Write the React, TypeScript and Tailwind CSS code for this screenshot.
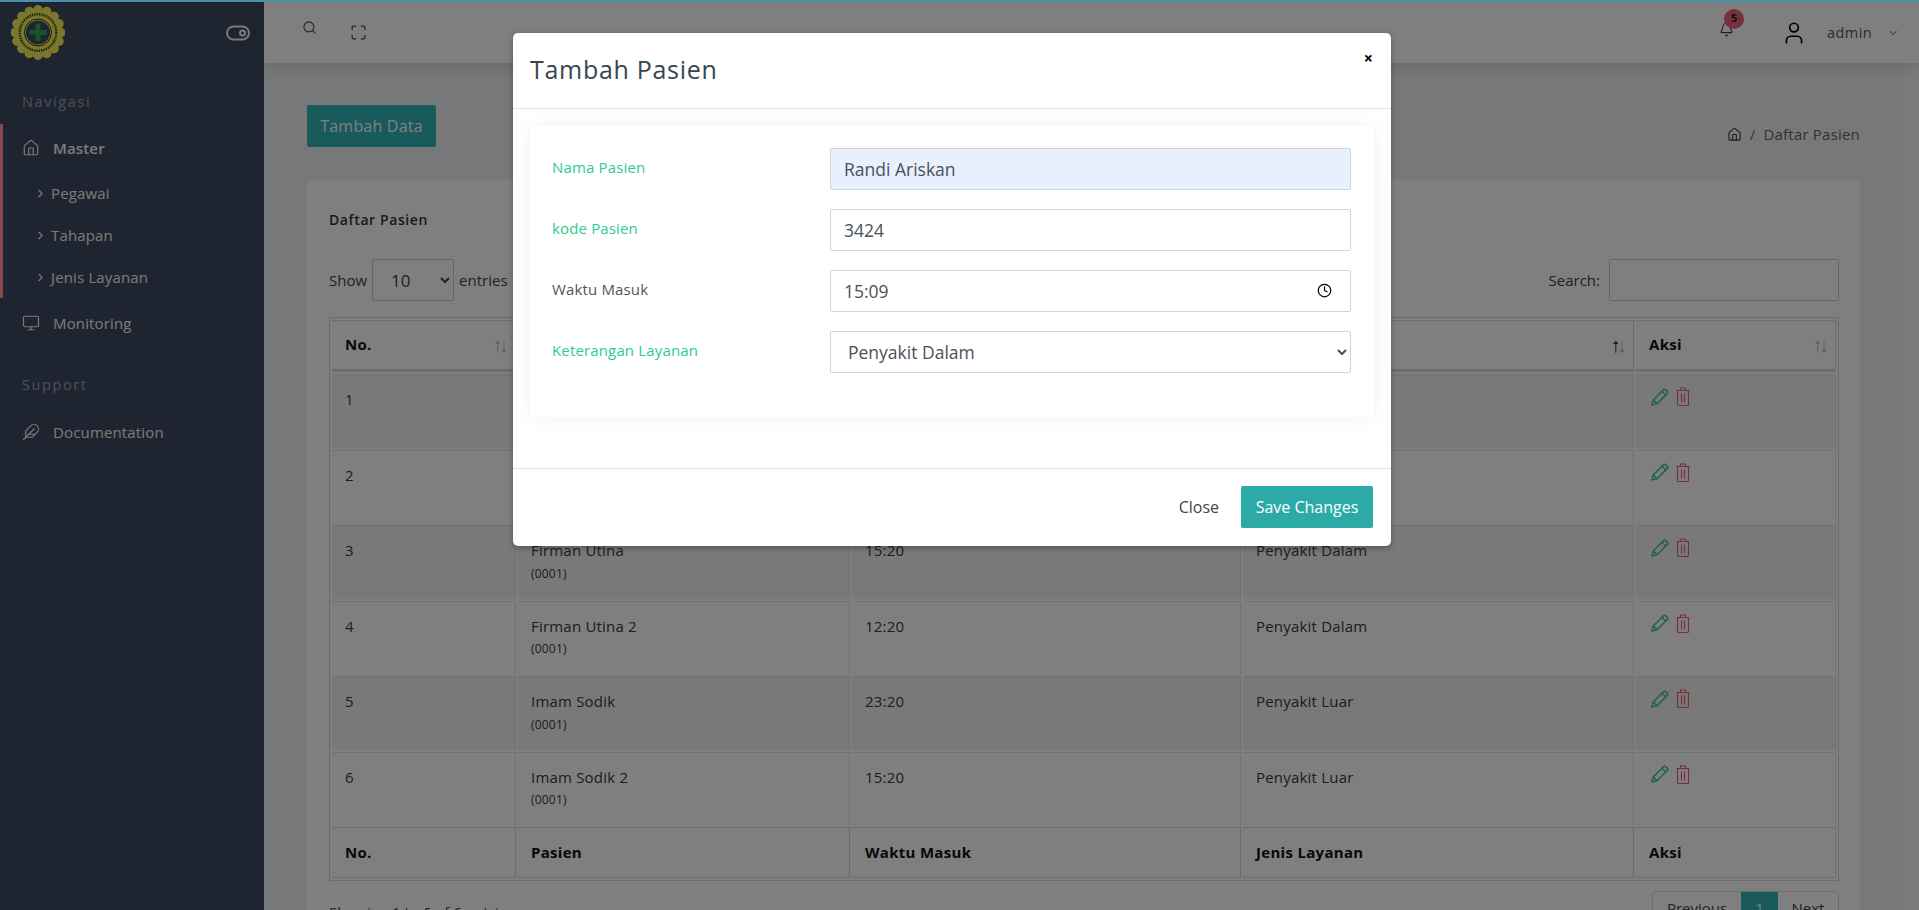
import { Bell, ChevronDown, ChevronRight, Clock, Feather, House, Maximize, Monitor, Search, User } from 'lucide-react'

const rows = [
  { no: 1, name: 'Randi Ariskan', time: '15:20', service: 'Penyakit Dalam' },
  { no: 2, name: 'Randi Ariskan 2', time: '15:20', service: 'Penyakit Dalam' },
  { no: 3, name: 'Firman Utina', time: '15:20', service: 'Penyakit Dalam' },
  { no: 4, name: 'Firman Utina 2', time: '12:20', service: 'Penyakit Dalam' },
  { no: 5, name: 'Imam Sodik', time: '23:20', service: 'Penyakit Luar' },
  { no: 6, name: 'Imam Sodik 2', time: '15:20', service: 'Penyakit Luar' },
]

function Logo() {
  const bumps = Array.from({ length: 16 }, (_, i) => {
    const a = (i / 16) * Math.PI * 2
    return { cx: 28 + Math.cos(a) * 23.5, cy: 28 + Math.sin(a) * 23.5 }
  })
  return (
    <svg width="54" height="55" viewBox="0 0 56 56">
      {bumps.map((b, i) => (
        <circle key={i} cx={b.cx} cy={b.cy} r="5" fill="#f6f05a" />
      ))}
      <circle cx="28" cy="28" r="24" fill="#f6f05a" />
      <circle cx="28" cy="28" r="19" fill="none" stroke="#3e4b20" strokeWidth="2.5" strokeDasharray="1.5 1" />
      <circle cx="28" cy="28" r="14" fill="#f6f05a" stroke="#1c2418" strokeWidth="1" />
      <circle cx="28" cy="28" r="12.5" fill="#3e4a60" />
      <path d="M25.5 19h5v6.5H37v5h-6.5V37h-5v-6.5H19v-5h6.5z" fill="#2aa851" />
    </svg>
  )
}

function PencilIcon() {
  return (
    <svg width="18" height="18" viewBox="0 0 18 18" fill="none" stroke="#45c88c" strokeWidth="1.6" strokeLinejoin="round">
      <path d="M1 17l1.2-5L12.6 1.6a1.4 1.4 0 0 1 2 0l1.8 1.8a1.4 1.4 0 0 1 0 2L6 15.8z" />
      <path d="M11 3.2l3.8 3.8M2.2 12L6 15.8" />
    </svg>
  )
}

function TrashIcon() {
  return (
    <svg width="14" height="19" viewBox="0 0 14 19" fill="none" stroke="#ee5f76" strokeWidth="1.1">
      <path d="M0.5 3.5h13M4.5 3.5V1h5v2.5" />
      <rect x="1.5" y="3.5" width="11" height="15" rx="1" />
      <path d="M5.5 6.5v9M8.5 6.5v9" />
    </svg>
  )
}

function SortArrows({ active }: { active?: boolean }) {
  return (
    <span className="absolute right-[6px] top-[13px] flex text-[20px] leading-[22px] font-normal text-[#111]">
      <span className={active ? '' : 'opacity-30'}>↑</span>
      <span className="opacity-30 -ml-[4px]">↓</span>
    </span>
  )
}

function Sidebar() {
  return (
    <aside className="w-[264px] shrink-0 bg-[#3e4a60] text-[#f5f5f5] text-[15px] tracking-[0.15px]">
      <div className="h-[61px] flex items-center justify-between pl-[11px] pr-[14px]">
        <Logo />
        <svg width="24" height="16" viewBox="0 0 24 16" fill="none" stroke="#f5f5f5" strokeWidth="2">
          <rect x="1" y="1.5" width="22" height="13" rx="6.5" />
          <circle cx="16.5" cy="8" r="2.5" />
        </svg>
      </div>
      <div className="mt-[27px] h-6 pl-[22px] text-[14.5px] leading-6 text-[#9aa3b2] tracking-[1.6px]">Navigasi</div>
      <div className="mt-[10px] border-l-[3px] border-[#ff9a98]">
        <div className="h-12 flex items-center pl-[19px] font-semibold">
          <House size={18} strokeWidth={1.6} />
          <span className="ml-[13px]">Master</span>
        </div>
        {['Pegawai', 'Tahapan', 'Jenis Layanan'].map((item) => (
          <div key={item} className="h-[42px] flex items-center pl-[31px]">
            <ChevronRight size={13} strokeWidth={2} />
            <span className="ml-[4px]">{item}</span>
          </div>
        ))}
      </div>
      <div className="h-[50px] flex items-center pl-[22px]">
        <Monitor size={18} strokeWidth={1.6} />
        <span className="ml-[13px]">Monitoring</span>
      </div>
      <div className="mt-[25px] h-6 pl-[22px] text-[14.5px] leading-6 text-[#9aa3b2] tracking-[1.6px]">Support</div>
      <div className="mt-[10px] h-[50px] flex items-center pl-[22px]">
        <Feather size={18} strokeWidth={1.6} />
        <span className="ml-[13px]">Documentation</span>
      </div>
    </aside>
  )
}

function Navbar() {
  return (
    <header className="relative z-10 h-[61px] shrink-0 bg-white flex items-center shadow-[0_5px_14px_rgba(0,0,0,0.12)] text-[#444]">
      <Search size={15} strokeWidth={1.7} className="ml-[38px] -mt-[10px]" />
      <Maximize size={17} strokeWidth={1.7} className="ml-[33px] -mt-[1px]" />
      <div className="relative ml-auto">
        <Bell size={15} strokeWidth={1.7} className="-mt-[7px]" />
        <span className="absolute -top-[20px] left-[5px] w-5 h-5 rounded-full bg-[#f0607a] text-[#222] text-[11px] font-bold flex items-center justify-center">5</span>
      </div>
      <User size={26} strokeWidth={1.6} className="ml-[47px] text-black" />
      <span className="ml-[20px] text-[14.5px] tracking-[0.4px] text-[#555]">admin</span>
      <ChevronDown size={12} strokeWidth={2} className="ml-[15px] mr-[20px] text-[#555]" />
    </header>
  )
}

function DataTable() {
  const th = 'relative h-[52px] pl-[13px] pb-[2px] text-left text-[15px] font-bold tracking-[0.3px] text-[#111] border-t border-b-[3px] border-r border-[#d8dbdf]'
  const tf = 'h-[50.5px] pl-[13px] text-left text-[15px] font-bold tracking-[0.3px] text-[#111] border-t border-b border-r border-[#d8dbdf]'
  const td = 'h-[73.5px] pl-[13px] pt-[13px] align-top text-[15px] tracking-[0.2px] text-[#3a3a3a] border-t border-r border-[#e2e4e8]'
  return (
    <table className="table-fixed w-[1510px] border-separate border-spacing-[2px] border border-[#d4d7db]">
      <colgroup>
        <col className="w-[184px]" />
        <col className="w-[332px]" />
        <col className="w-[389px]" />
        <col className="w-[391px]" />
        <col className="w-[200px]" />
      </colgroup>
      <thead>
        <tr>
          <th className={th}>No.<SortArrows /></th>
          <th className={th}>Pasien<SortArrows /></th>
          <th className={th}>Waktu Masuk<SortArrows /></th>
          <th className={th}>Jenis Layanan<SortArrows active /></th>
          <th className={th}>Aksi<SortArrows /></th>
        </tr>
      </thead>
      <tbody>
        {rows.map((row) => (
          <tr key={row.no} className={row.no % 2 === 1 ? 'bg-[#f2f2f2]' : ''}>
            <td className={td}>{row.no}</td>
            <td className={td}>
              <div>{row.name}</div>
              <div className="mt-[3px] text-[12px]">(0001)</div>
            </td>
            <td className={td}>{row.time}</td>
            <td className={td}>{row.service}</td>
            <td className={td}>
              <div className="flex items-center gap-[7px] ml-[2px] -mt-[1px]">
                <PencilIcon />
                <TrashIcon />
              </div>
            </td>
          </tr>
        ))}
      </tbody>
      <tfoot>
        <tr>
          <th className={tf}>No.</th>
          <th className={tf}>Pasien</th>
          <th className={tf}>Waktu Masuk</th>
          <th className={tf}>Jenis Layanan</th>
          <th className={tf}>Aksi</th>
        </tr>
      </tfoot>
    </table>
  )
}

function PatientModal() {
  const label = 'w-[278px] shrink-0 text-[15px] tracking-[0.15px] -mt-[4px]'
  const input = 'w-[521px] h-[42px] rounded-[2px] border border-[#ced4da] pl-[13px] text-[17.5px] text-[#495057] outline-none'
  return (
    <div className="absolute inset-0 z-20 bg-black/50 flex justify-center pr-[15px] pt-[31px] items-start">
      <div className="w-[878px] h-[513px] bg-white rounded-[5px] flex flex-col shadow-[0_2px_6px_rgba(0,0,0,0.3)]">
        <div className="relative h-[76px] shrink-0 border-b border-[#dee2e6] pl-[17px] flex items-center">
          <h4 className="text-[25px] font-normal tracking-[0.7px] text-[#37474f] -mt-[1px]">Tambah Pasien</h4>
          <button className="absolute right-[18px] top-[15px] text-[16px] font-bold text-black leading-5">×</button>
        </div>
        <div className="flex-1 px-[17px] pt-[17px]">
          <div className="h-[291px] rounded-[5px] px-[22px] pt-[22px] shadow-[0_0_20px_rgba(0,0,0,0.06)] flex flex-col gap-[19px]">
            <div className="flex items-center">
              <label className={`${label} text-[#2dcc8f]`}>Nama Pasien</label>
              <input readOnly defaultValue="Randi Ariskan" className={`${input} bg-[#e8f0fe] text-[#222]`} />
            </div>
            <div className="flex items-center">
              <label className={`${label} text-[#2dcc8f]`}>kode Pasien</label>
              <input readOnly defaultValue="3424" className={input} />
            </div>
            <div className="flex items-center">
              <label className={`${label} text-[#555]`}>Waktu Masuk</label>
              <div className="relative">
                <input readOnly defaultValue="15:09" className={input} />
                <Clock size={15} strokeWidth={2} className="absolute right-[19px] top-[13px] text-black" />
              </div>
            </div>
            <div className="flex items-center">
              <label className={`${label} text-[#2dcc8f]`}>Keterangan Layanan</label>
              <select defaultValue="Penyakit Dalam" className={`${input} bg-white`}>
                <option>Penyakit Dalam</option>
                <option>Penyakit Luar</option>
              </select>
            </div>
          </div>
        </div>
        <div className="h-[78px] shrink-0 border-t border-[#dee2e6] flex items-center justify-end pr-[18px] pb-[2px] gap-[22px]">
          <button className="text-[16px] text-[#444]">Close</button>
          <button className="w-[132px] h-[42px] rounded-[2px] bg-[#2baaa8] text-white text-[16px] font-medium">Save Changes</button>
        </div>
      </div>
    </div>
  )
}

export default function App() {
  return (
    <div className="h-[910px] overflow-hidden flex flex-col font-['Open_Sans',sans-serif]">
      <div className="relative z-30 h-[2px] shrink-0 bg-[#4a90a8]" />
      <div className="relative flex-1 flex min-h-0">
        <Sidebar />
        <div className="flex-1 flex flex-col min-w-0 bg-[#eef0f2]">
          <Navbar />
          <main className="flex-1 flex min-h-0">
            <div className="w-[1596px] pl-[43px]">
              <div className="mt-[42px] flex items-center justify-between h-[42px]">
                <button className="w-[129px] h-[42px] rounded-[2px] bg-[#33b5b5] text-white text-[16px] tracking-[0.2px]">Tambah Data</button>
                <div className="flex items-center text-[15px] tracking-[0.2px] text-[#666] mt-[16px]">
                  <House size={15} strokeWidth={1.7} className="text-[#333]" />
                  <span className="mx-[8px]">/</span>
                  <span>Daftar Pasien</span>
                </div>
              </div>
              <section className="mt-[33px] h-[800px] bg-white rounded-[5px] pl-[22px] pr-[21px]">
                <div className="pt-[29px] text-[14px] font-semibold tracking-[0.6px] text-[#333]">Daftar Pasien</div>
                <div className="mt-[29px] flex items-center justify-between text-[15px] text-[#444]">
                  <div className="flex items-center">
                    <span>Show</span>
                    <select defaultValue="10" className="w-[82px] h-[42px] mx-[5px] rounded-[2px] border border-[#c8ccd0] pl-[14px] text-[17px] bg-white">
                      <option>10</option>
                      <option>25</option>
                    </select>
                    <span>entries</span>
                  </div>
                  <div className="flex items-center">
                    <span>Search:</span>
                    <input readOnly className="ml-[9px] w-[230px] h-[42px] rounded-[2px] border border-[#c8ccd0]" />
                  </div>
                </div>
                <div className="mt-[16px]">
                  <DataTable />
                </div>
                <div className="mt-[10px] flex justify-between items-start text-[15px] text-[#444]">
                  <span className="mt-[10px]">Showing 1 to 6 of 6 entries</span>
                  <div className="flex h-[36px] border border-[#d8dbdf] rounded-[4px]">
                    <span className="w-[88px] flex items-center justify-center">Previous</span>
                    <span className="w-[37px] flex items-center justify-center bg-[#33b5b5] text-white">1</span>
                    <span className="w-[60px] flex items-center justify-center">Next</span>
                  </div>
                </div>
              </section>
            </div>
            <div className="flex-1" />
            <div className="w-[15px] bg-[#f4f6f8]" />
          </main>
        </div>
        <PatientModal />
      </div>
    </div>
  )
}
